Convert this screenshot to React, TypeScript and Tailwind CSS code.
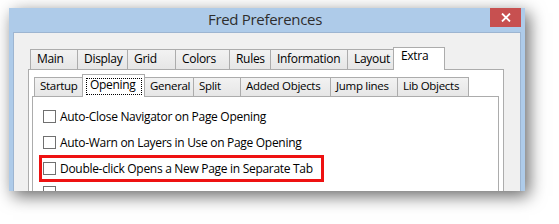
import React from 'react';

interface TabDef {
  label: string;
  width: string;
  selected?: boolean;
}

const mainTabs: TabDef[] = [
  { label: 'Main', width: 'w-[48px]' },
  { label: 'Display', width: 'w-[51px]' },
  { label: 'Grid', width: 'w-[49px]' },
  { label: 'Colors', width: 'w-[55px]' },
  { label: 'Rules', width: 'w-[42px]' },
  { label: 'Information', width: 'w-[78px]' },
  { label: 'Layout', width: 'w-[47px]' },
  { label: 'Extra', width: 'w-[52px]', selected: true },
];

const subTabs: TabDef[] = [
  { label: 'Startup', width: 'w-[49px]' },
  { label: 'Opening', width: 'w-[63px]', selected: true },
  { label: 'General', width: 'w-[50px]' },
  { label: 'Split', width: 'w-[48px]' },
  { label: 'Added Objects', width: 'w-[91px]' },
  { label: 'Jump lines', width: 'w-[68px]' },
  { label: 'Lib Objects', width: 'w-[72px]' },
];

const options = [
  'Auto-Close Navigator on Page Opening',
  'Auto-Warn on Layers in Use on Page Opening',
  'Double-click Opens a New Page in Separate Tab',
];

const MainTab: React.FC<{ tab: TabDef; first: boolean }> = ({ tab, first }) =>
  tab.selected ? (
    <div className={`${tab.width} relative z-10 -mb-px -ml-px h-[23px] border border-b-0 border-[#acacac] bg-white pl-[7px] leading-[16px]`}>
      {tab.label}
    </div>
  ) : (
    <div
      className={`${tab.width} ${first ? 'ml-[2px]' : '-ml-px'} h-[20px] border border-b-0 border-[#acacac] bg-linear-to-b from-[#f2f2f2] to-[#e6e6e6] pl-[6px] pt-[1px] leading-[16px]`}
    >
      {tab.label}
    </div>
  );

const SubTab: React.FC<{ tab: TabDef; first: boolean }> = ({ tab, first }) =>
  tab.selected ? (
    <div className={`${tab.width} relative z-10 -mb-px -ml-px h-[23px] border border-b-0 border-[#acacac] bg-white pl-[3px] pt-[3px]`}>
      <div className="h-[17px] w-[56px] border border-dotted border-black pl-[3px] leading-[12px]">{tab.label}</div>
    </div>
  ) : (
    <div
      className={`${tab.width} ${first ? 'ml-[2px]' : '-ml-px'} h-[19px] border border-b-0 border-[#acacac] bg-linear-to-b from-[#f2f2f2] to-[#e6e6e6] pl-[5px] text-[11.5px] leading-[16px] tracking-[-0.3px]`}
    >
      {tab.label}
    </div>
  );

const CheckBox: React.FC = () => <div className="h-[13px] w-[13px] shrink-0 border border-[#707070] bg-white" />;

export default function App() {
  return (
    <div className="h-[224px] w-[559px] overflow-hidden bg-white font-['Open_Sans','Noto_Sans',sans-serif] text-[12px] tracking-[-0.3px] text-black">
      <div className="pl-[9px] pt-[8px]">
        <div className="flex h-[183px] w-[516px] flex-col overflow-hidden bg-[#aecbe9] shadow-[4px_5px_16px_rgba(0,0,0,0.6)]">
          {/* title bar */}
          <div className="grid h-[28px] grid-cols-[1fr_auto_1fr] pr-[4px]">
            <div />
            <div className="self-center pb-[1px] text-[15px] text-[#2e2e2e]">Fred Preferences</div>
            <div className="flex justify-end">
              <div className="flex h-[19px] w-[31px] items-center justify-center bg-[#c75050]">
                <svg width="10" height="9" viewBox="0 0 10 9">
                  <path d="M1 0.5 L9 8.5 M9 0.5 L1 8.5" stroke="white" strokeWidth="1.8" />
                </svg>
              </div>
            </div>
          </div>

          {/* body */}
          <div className="mx-[4px] flex flex-1 flex-col border border-b-0 border-[#9db5d1] bg-[#f0f0f0] pl-[14px] pt-[14px]">
            <div className="flex items-end">
              {mainTabs.map((t, i) => (
                <MainTab key={t.label} tab={t} first={i === 0} />
              ))}
            </div>

            <div className="flex w-[476px] flex-1 flex-col border border-b-0 border-[#acacac] bg-white pl-[3px] pr-[4px] pt-[4px]">
              <div className="flex items-end">
                {subTabs.map((t, i) => (
                  <SubTab key={t.label} tab={t} first={i === 0} />
                ))}
              </div>

              <div className="flex flex-1 flex-col gap-[13px] border border-b-0 border-[#acacac] bg-white pl-[10px] pt-[13px]">
                {options.map((label, i) => (
                  <div key={label} className="relative flex h-[13px] items-center gap-[4px]">
                    <CheckBox />
                    <span className="whitespace-nowrap leading-[13px]">{label}</span>
                    {i === 2 && (
                      <div className="absolute -left-[4px] -top-[7px] h-[27px] w-[285px] border-[3px] border-[#ee1111]" />
                    )}
                  </div>
                ))}
                <div className="-mt-[2px] flex h-[13px] items-center">
                  <CheckBox />
                </div>
              </div>
            </div>
          </div>
        </div>
      </div>
    </div>
  );
}
